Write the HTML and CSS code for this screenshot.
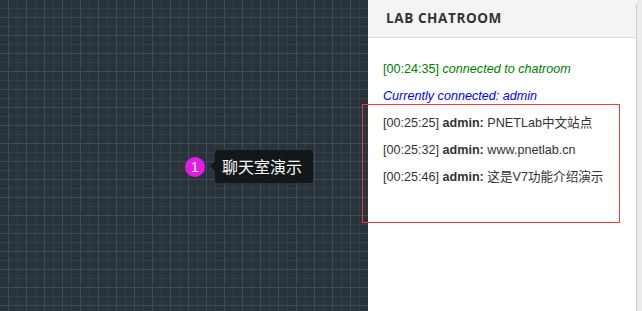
FILE: index.html
```html
<!DOCTYPE html>
<html lang="zh">
<head>
<meta charset="utf-8">
<title>Lab Chatroom</title>
<link rel="stylesheet" href="styles.css">
</head>
<body>
<div class="app">
  <div class="canvas">
    <div class="pin">1</div>
    <div class="tip">聊天室演示</div>
  </div>
  <div class="panel">
    <div class="panel-head">LAB CHATROOM</div>
    <div class="panel-body">
      <div class="msg sys">[00:24:35] <i>connected to chatroom</i></div>
      <div class="msg info"><i>Currently connected: admin</i></div>
      <div class="msg">[00:25:25] <b>admin:</b> PNETLab中文站点</div>
      <div class="msg">[00:25:32] <b>admin:</b> www.pnetlab.cn</div>
      <div class="msg">[00:25:46] <b>admin:</b> 这是V7功能介绍演示</div>
    </div>
  </div>
  <div class="strip"></div>
  <div class="highlight"></div>
</div>
</body>
</html>
```
FILE: styles.css
```css
html, body {
  margin: 0;
  padding: 0;
  width: 642px;
  height: 311px;
  overflow: hidden;
}
.app {
  position: relative;
  display: flex;
  width: 642px;
  height: 311px;
}
.canvas {
  position: relative;
  flex: 0 0 368px;
  height: 311px;
  background-color: #29333c;
  background-image:
    linear-gradient(90deg, #3f4a53 1px, transparent 1px),
    linear-gradient(#3f4a53 1px, transparent 1px),
    linear-gradient(90deg, #333d46 1px, transparent 1px),
    linear-gradient(#333d46 1px, transparent 1px);
  background-size: 18px 18px, 18px 18px, 9px 9px, 9px 9px;
  background-position: 8px 0, 0 17px, 8px 0, 0 8px;
}
.pin {
  position: absolute;
  left: 185px;
  top: 157px;
  width: 20px;
  height: 20px;
  border-radius: 50%;
  background: #e619e6;
  color: #fff;
  font: 14px/20px "Liberation Sans", Arial, sans-serif;
  text-align: center;
}
.tip {
  position: absolute;
  left: 215px;
  top: 150px;
  width: 98px;
  height: 33px;
  box-sizing: border-box;
  padding-left: 7px;
  background: #121719;
  border-radius: 3px;
  color: #f7f7f7;
  font: 16px/33px "Noto Sans CJK SC", "Noto Sans", sans-serif;
}
.tip::before {
  content: "";
  position: absolute;
  left: -5px;
  top: 11px;
  border-top: 5px solid transparent;
  border-bottom: 5px solid transparent;
  border-right: 5px solid #121719;
}
.panel {
  flex: 0 0 268px;
  height: 311px;
  background: #fff;
  border-right: 1px solid #cfcfcf;
  border-top-right-radius: 5px;
  overflow: hidden;
}
.panel-head {
  height: 38px;
  box-sizing: border-box;
  padding-left: 18px;
  background: #f4f4f4;
  border-bottom: 1px solid #dcdcdc;
  color: #333;
  font: 700 13.5px/37px "Open Sans", "Noto Sans", sans-serif;
  letter-spacing: 0.6px;
}
.panel-body {
  padding: 18px 0 0 15px;
  font: 12.6px/17px "Liberation Sans", Arial, "Noto Sans CJK SC", sans-serif;
  color: #333;
}
.msg {
  padding: 5px 0;
  white-space: nowrap;
}
.msg b {
  font-weight: 700;
}
.sys {
  color: #008000;
}
.info {
  color: #0000ff;
}
.strip {
  flex: 0 0 5px;
  background: #ececec;
}
.highlight {
  position: absolute;
  left: 362px;
  top: 104px;
  width: 256px;
  height: 117px;
  border: 1px solid #ee3b3b;
}
```
